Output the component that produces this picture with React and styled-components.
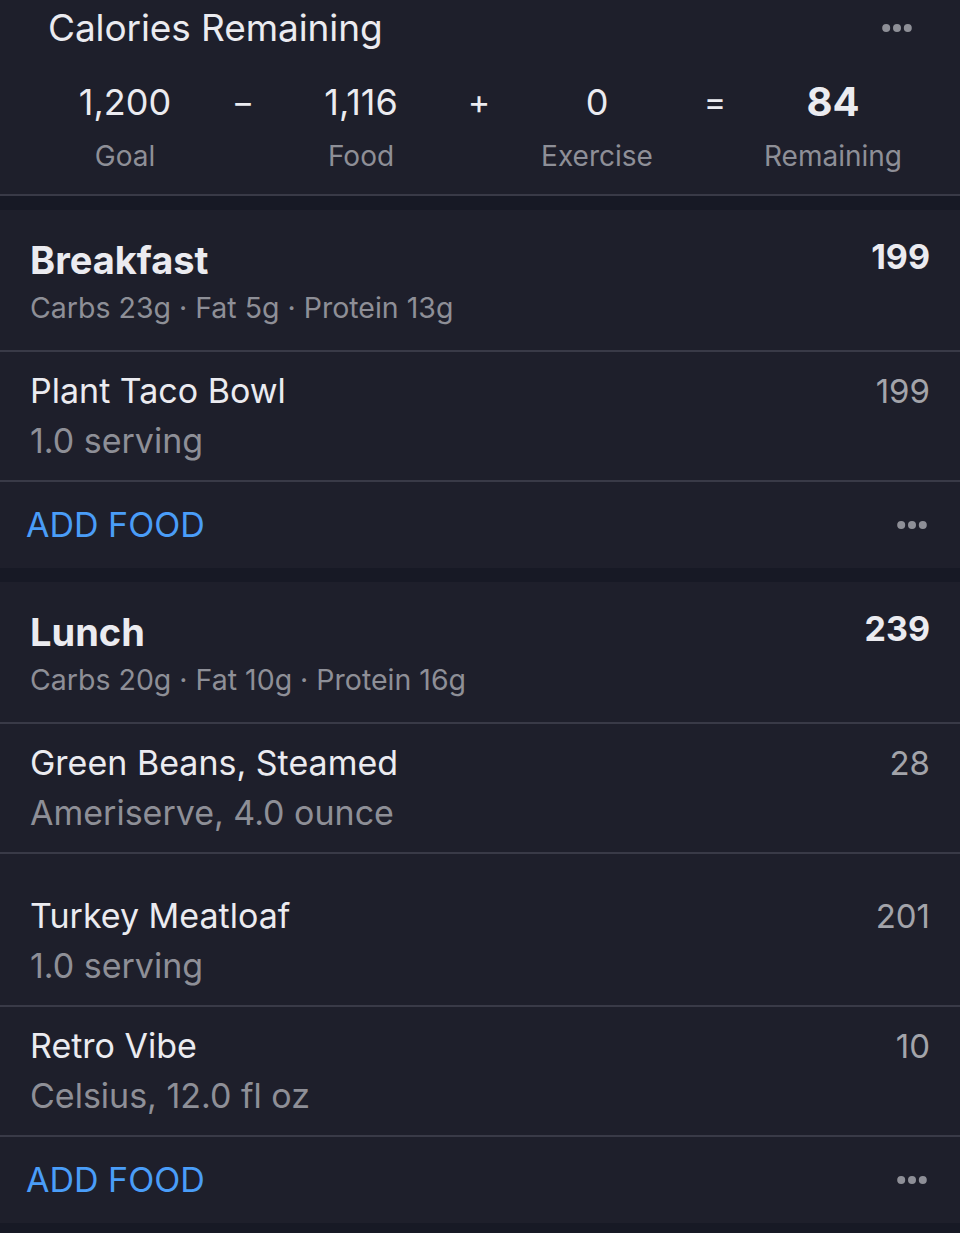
import React from "react";
import styled, { createGlobalStyle } from "styled-components";

const GlobalStyle = createGlobalStyle`
  html, body {
    margin: 0;
    padding: 0;
    background: #171925;
  }
  body {
    font-family: Inter, "Noto Sans", "Liberation Sans", sans-serif;
    -webkit-font-smoothing: antialiased;
  }
  * { box-sizing: border-box; }
`;

const Page = styled.div`
  width: 960px;
  min-height: 1233px;
  background: #171925;
  display: flex;
  flex-direction: column;
  gap: 14px;
`;

const Summary = styled.section`
  background: #1e1f2b;
  border-bottom: 2px solid #393a47;
  height: 196px;
  padding: 6px 48px 0 48px;
  display: flex;
  flex-direction: column;
`;

const SummaryTop = styled.div`
  display: flex;
  justify-content: space-between;
  align-items: center;
  height: 43px;
`;

const SummaryTitle = styled.h1`
  margin: 0;
  font-size: 37px;
  font-weight: 400;
  color: #ebebf0;
  line-height: 43px;
  letter-spacing: -0.1px;
`;

const Equation = styled.div`
  display: grid;
  grid-template-columns: repeat(7, 118px);
  margin-left: 18px;
  margin-top: 30px;
`;

const Term = styled.div`
  display: flex;
  flex-direction: column;
  align-items: center;
`;

const TermValue = styled.div`
  font-size: ${(p) => (p.$bold ? "40px" : "36px")};
  font-weight: ${(p) => (p.$bold ? 700 : 400)};
  color: #ebebf0;
  line-height: 46px;
  height: 46px;
`;

const TermLabel = styled.div`
  font-size: 28px;
  color: #8e8f97;
  line-height: 34px;
  margin-top: 14px;
`;

const Operator = styled.div`
  font-size: 34px;
  color: #ebebf0;
  line-height: 46px;
  text-align: center;
`;

const Section = styled.section`
  background: #1e1f2b;
  display: flex;
  flex-direction: column;
`;

const MealHeader = styled.div`
  display: flex;
  justify-content: space-between;
  align-items: flex-start;
  padding: 29px 30px 23px 30px;
  height: 140px;
`;

const MealInfo = styled.div`
  display: flex;
  flex-direction: column;
  gap: 9px;
`;

const MealName = styled.h2`
  margin: 0;
  font-size: 38px;
  font-weight: 700;
  color: #ebebf0;
  line-height: 43px;
`;

const Macros = styled.div`
  font-size: 28.5px;
  color: #8e8f97;
  line-height: 34px;
`;

const MealTotal = styled.div`
  font-size: 34px;
  font-weight: 700;
  color: #ebebf0;
  line-height: 40px;
  margin-top: -2px;
`;

const FoodRow = styled.div`
  border-top: 2px solid #393a47;
  display: flex;
  justify-content: space-between;
  align-items: flex-start;
  padding: ${(p) => (p.$tall ? "37px" : "14px")} 30px 14px 30px;
`;

const FoodInfo = styled.div`
  display: flex;
  flex-direction: column;
`;

const FoodName = styled.div`
  font-size: 34px;
  color: #ebebf0;
  line-height: 50px;
`;

const FoodDetail = styled.div`
  font-size: 34px;
  color: #8e8f97;
  line-height: 50px;
`;

const FoodCalories = styled.div`
  font-size: 33px;
  color: #a3a4aa;
  line-height: 50px;
`;

const AddRow = styled.div`
  border-top: 2px solid #393a47;
  height: 88px;
  display: flex;
  justify-content: space-between;
  align-items: center;
  padding: 0 33px 0 26px;
`;

const AddButton = styled.button`
  background: none;
  border: none;
  padding: 0;
  font-family: inherit;
  font-size: 34px;
  color: #4a9df8;
  line-height: 44px;
  cursor: pointer;
`;

const DotsButton = styled.button`
  background: none;
  border: none;
  padding: 0;
  display: flex;
  align-items: center;
  cursor: pointer;
`;

const Dots = () => (
  <DotsButton aria-label="More">
    <svg width="30" height="10" viewBox="0 0 30 10">
      <circle cx="4.2" cy="5" r="4" fill="#8e8f97" />
      <circle cx="15" cy="5" r="4" fill="#8e8f97" />
      <circle cx="25.8" cy="5" r="4" fill="#8e8f97" />
    </svg>
  </DotsButton>
);

const meals = [
  {
    name: "Breakfast",
    total: 199,
    macros: "Carbs 23g · Fat 5g · Protein 13g",
    foods: [{ name: "Plant Taco Bowl", detail: "1.0 serving", cal: 199 }],
  },
  {
    name: "Lunch",
    total: 239,
    macros: "Carbs 20g · Fat 10g · Protein 16g",
    foods: [
      { name: "Green Beans, Steamed", detail: "Ameriserve, 4.0 ounce", cal: 28 },
      { name: "Turkey Meatloaf", detail: "1.0 serving", cal: 201, tall: true },
      { name: "Retro Vibe", detail: "Celsius, 12.0 fl oz", cal: 10 },
    ],
  },
];

export default function App() {
  return (
    <>
      <GlobalStyle />
      <Page>
        <Summary>
          <SummaryTop>
            <SummaryTitle>Calories Remaining</SummaryTitle>
            <Dots />
          </SummaryTop>
          <Equation>
            <Term>
              <TermValue>1,200</TermValue>
              <TermLabel>Goal</TermLabel>
            </Term>
            <Operator>−</Operator>
            <Term>
              <TermValue>1,116</TermValue>
              <TermLabel>Food</TermLabel>
            </Term>
            <Operator>+</Operator>
            <Term>
              <TermValue>0</TermValue>
              <TermLabel>Exercise</TermLabel>
            </Term>
            <Operator>=</Operator>
            <Term>
              <TermValue $bold>84</TermValue>
              <TermLabel>Remaining</TermLabel>
            </Term>
          </Equation>
        </Summary>

        {meals.map((meal) => (
          <Section key={meal.name}>
            <MealHeader>
              <MealInfo>
                <MealName>{meal.name}</MealName>
                <Macros>{meal.macros}</Macros>
              </MealInfo>
              <MealTotal>{meal.total}</MealTotal>
            </MealHeader>
            {meal.foods.map((f) => (
              <FoodRow key={f.name} $tall={f.tall}>
                <FoodInfo>
                  <FoodName>{f.name}</FoodName>
                  <FoodDetail>{f.detail}</FoodDetail>
                </FoodInfo>
                <FoodCalories>{f.cal}</FoodCalories>
              </FoodRow>
            ))}
            <AddRow>
              <AddButton>ADD FOOD</AddButton>
              <Dots />
            </AddRow>
          </Section>
        ))}
      </Page>
    </>
  );
}
